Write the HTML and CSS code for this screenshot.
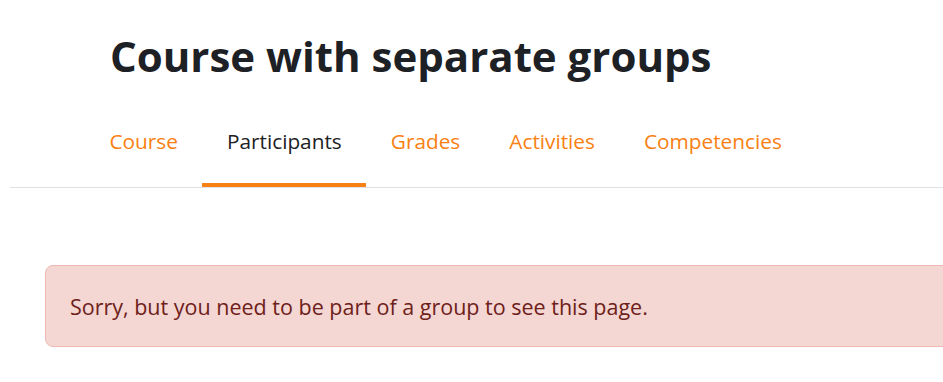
FILE: index.html
```html
<!DOCTYPE html>
<html lang="en">
  <head>
    <meta charset="UTF-8" />
    <meta name="viewport" content="width=device-width, initial-scale=1.0" />
    <title>Course with separate groups</title>
    <link rel="stylesheet" href="styles.css">
  </head>
  <body>
    <div class="page">
      <header class="page-header">
        <h1>Course with separate groups</h1>
      </header>
      <nav class="secondary-nav">
        <a href="#" class="tab">Course</a>
        <a href="#" class="tab active">Participants</a>
        <a href="#" class="tab">Grades</a>
        <a href="#" class="tab">Activities</a>
        <a href="#" class="tab">Competencies</a>
      </nav>
      <div class="main">
        <div class="alert">Sorry, but you need to be part of a group to see this page.</div>
      </div>
    </div>
  </body>
</html>
```
FILE: styles.css
```css
body {
  margin: 0;
  background: #fff;
  font-family: "Open Sans", "Noto Sans", sans-serif;
  color: #1d2125;
  overflow: hidden;
}
.page {
  padding-left: 10px;
  width: 933px;
}
.page-header {
  padding: 24px 0 0 100px;
}
.page-header h1 {
  margin: 0;
  font-size: 42px;
  font-weight: 700;
  line-height: 64px;
}
.secondary-nav {
  display: flex;
  margin-top: 30px;
  padding-left: 75px;
  border-bottom: 1px solid #dee2e6;
}
.tab {
  padding: 0 24.5px;
  height: 69px;
  line-height: 46px;
  font-size: 20.8px;
  color: #f98012;
  text-decoration: none;
  box-sizing: border-box;
}
.tab.active {
  color: #1d2125;
  border-bottom: 4px solid #f98012;
}
.main {
  padding: 77px 0 0 35px;
}
.alert {
  height: 82px;
  margin-right: -40px;
  box-sizing: border-box;
  display: flex;
  align-items: center;
  padding-left: 24px;
  background: #f4d6d2;
  border: 1px solid #eeb9b2;
  border-radius: 8px;
  color: #6e211a;
  font-size: 21.5px;
}
```
